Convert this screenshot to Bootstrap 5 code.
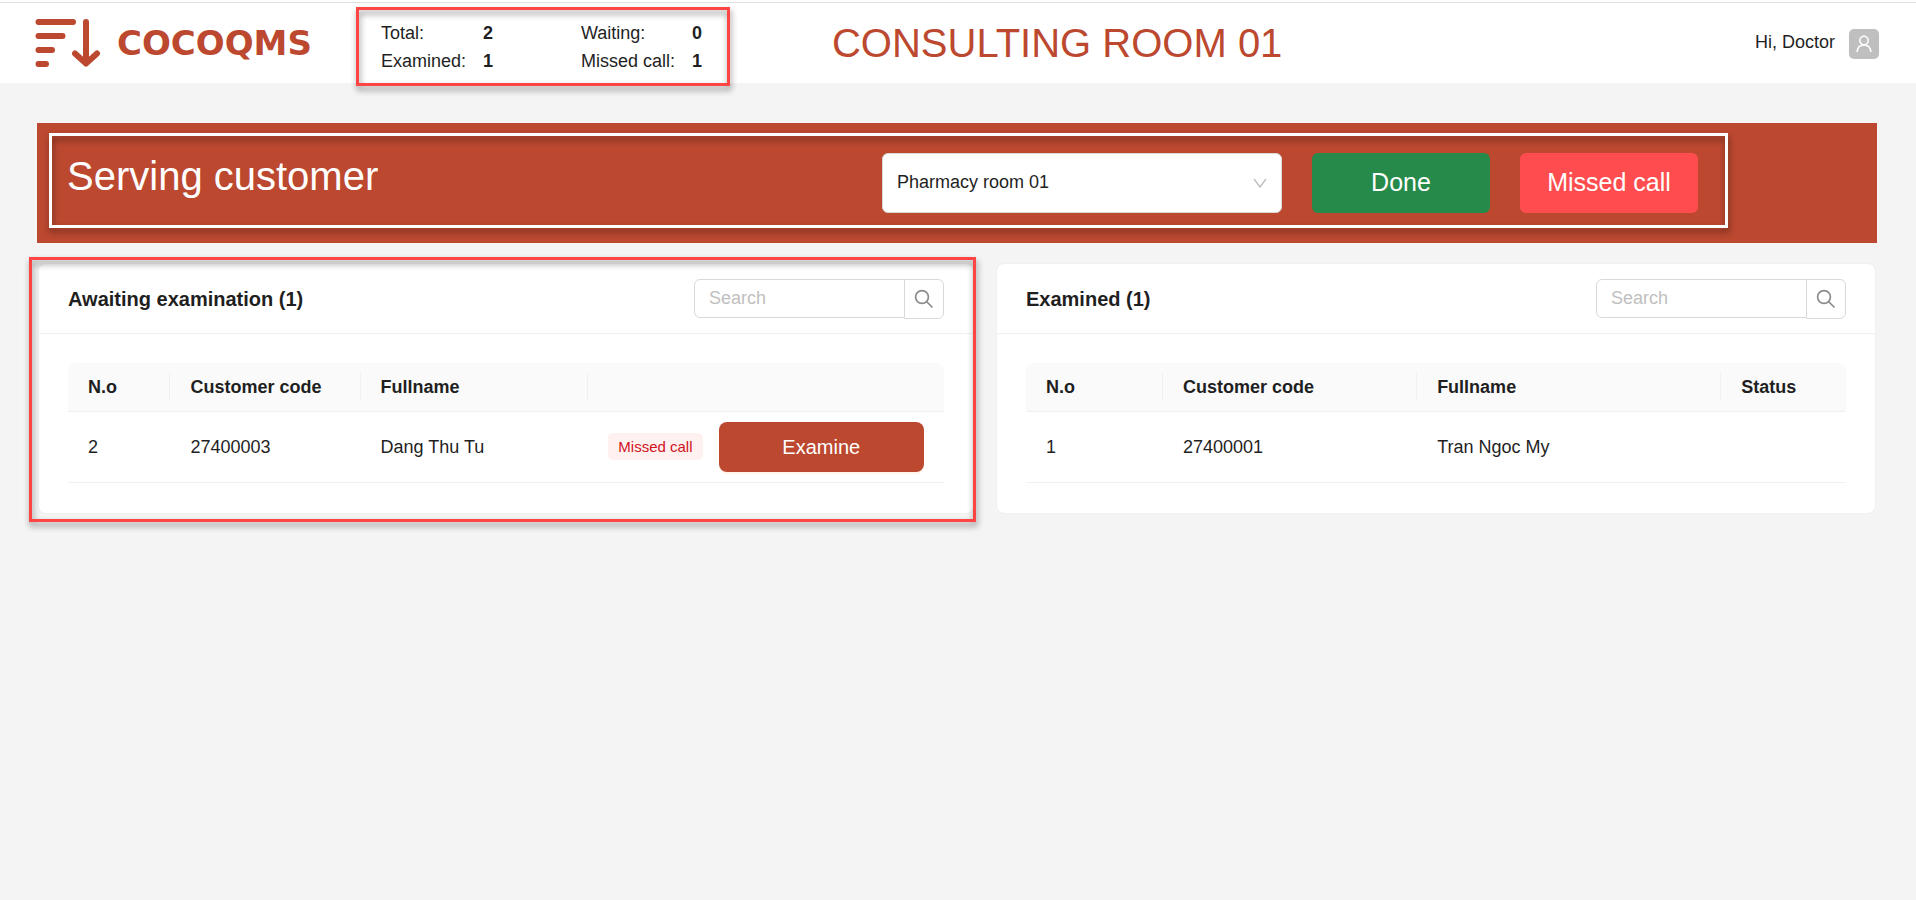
<!DOCTYPE html>
<html lang="en">
<head>
<meta charset="utf-8">
<meta name="viewport" content="width=device-width, initial-scale=1">
<title>CocoQMS – Consulting room 01</title>
<link href="https://cdn.jsdelivr.net/npm/bootstrap@5.3.0/dist/css/bootstrap.min.css" rel="stylesheet">
<style>
  :root { --brand: #bc4830; --ink: #1f1f1f; --line: #f0f0f0; --edge: #d9d9d9; }
  body { background: #f4f4f4; color: var(--ink); font-family: "Liberation Sans", Arial, sans-serif; font-size: 18px; line-height: 28px; }

  /* Top bar */
  .topbar { min-height: 83px; padding: 2px 37px 0 35px; z-index: 1; }
  .topbar::before { content: ""; position: absolute; left: 0; right: 0; top: 2px; height: 1px; background: #e0e0e0; }
  .brand-name { color: var(--brand); font: bold 34px/40px "DejaVu Sans", sans-serif; }
  .stats { padding: 8px 25px; margin: 5px 0 -3px 44px; width: 374px; height: 79px; }
  .stats-grid { display: grid; grid-template-columns: 102px 98px 111px auto; width: max-content; }
  .stats-grid dt { font-weight: 400; }
  .room-title { color: var(--brand); font-size: 40px; line-height: 50px; margin-left: 102px; }
  .user { padding-top: 26px; gap: 14px; }
  .avatar { width: 30px; height: 30px; border-radius: 5px; background: #bfbfbf; }

  /* Highlight frames drawn over a region */
  .frame { position: absolute; pointer-events: none; border: 3px solid #ff4444; filter: drop-shadow(1px 4px 3px rgba(0, 0, 0, .45)); z-index: 2; }
  .frame-stats { inset: 0; }
  .frame-waiting { inset: -7px -3px -9px -10px; }
  .frame-serving { inset: 10px 149px 15px 12px; border-color: #fff; }

  /* Page body */
  .page { padding: 40px 39px 40px 37px; }
  .serving { background: var(--brand); min-height: 120px; padding: 30px 179px 30px 30px; gap: 30px; }
  .serving h2 { font-size: 40px; line-height: 46px; color: #fff; }
  .room-select { width: 400px; height: 60px; border: 1px solid var(--edge); border-radius: 6px; padding: 0 40px 2px 14px; font-size: 18px; color: var(--ink);
    background-image: url("data:image/svg+xml,%3csvg xmlns='http://www.w3.org/2000/svg' viewBox='0 0 14 10'%3e%3cpath d='M1 1l6 8 6-8' fill='none' stroke='%23bfbfbf' stroke-width='1.4'/%3e%3c/svg%3e");
    background-size: 14px 10px; background-position: right 14px center; }
  .action { width: 178px; height: 60px; border: 0; border-radius: 6px; font-size: 25px; color: #fff; }
  .action-done { background: #258a4a; }
  .action-missed { background: #ff4d4f; }

  .panels { display: grid; grid-template-columns: 936fr 880fr; gap: 22px; margin: 20px 1px 0; }
  .panel { border: 1px solid var(--line); border-radius: 8px; }
  .panel-head { height: 70px; padding: 0 29px; border-bottom: 1px solid var(--line); }
  .panel-head h3 { font-size: 20px; line-height: 28px; }
  .panel-body { padding: 29px 29px 30px; }

  .search { width: 250px; }
  .search .form-control { height: 39px; border: 1px solid var(--edge); border-radius: 6px; font-size: 18px; padding: 0 14px; color: var(--ink); }
  .search .form-control::placeholder { color: #bfbfbf; }
  .search .btn { width: 40px; height: 40px; padding: 0; border: 1px solid var(--edge); border-radius: 0 6px 6px 0; background: #fff; line-height: 0; }

  .queue { table-layout: fixed; width: 100%; }
  .queue th { position: relative; height: 48px; padding: 0 20px; background: #fafafa; border-bottom: 1px solid var(--line); }
  .queue th:first-child { border-top-left-radius: 8px; }
  .queue th:last-child { border-top-right-radius: 8px; }
  .queue th:not(:last-child)::after { content: ""; position: absolute; right: 0; top: 10px; width: 1px; height: 28px; background: var(--line); }
  .queue td { height: 71px; padding: 10px 20px; border-bottom: 1px solid var(--line); }
  .queue-waiting .c1 { width: 11.7%; } .queue-waiting .c2 { width: 21.7%; } .queue-waiting .c3 { width: 26%; }
  .queue-done .c1 { width: 16.7%; } .queue-done .c2 { width: 31%; } .queue-done .c3 { width: 37.1%; }
  .tag { background: #fff1f0; color: #cf1322; font-size: 15px; line-height: 27px; padding: 0 10px; border-radius: 5px; }
  .examine { height: 50px; border: 0; border-radius: 8px; background: var(--brand); color: #fff; font-size: 20px; box-shadow: 0 2px 0 rgba(255, 205, 150, .2); }
</style>
</head>
<body>

<header class="topbar bg-white position-relative d-flex align-items-start">
  <a href="#" class="d-flex align-items-center text-decoration-none mt-3" aria-label="COCOQMS">
    <svg width="66" height="50" viewBox="0 0 66 50" fill="none" stroke="#bc4830" stroke-width="6" stroke-linecap="round" stroke-linejoin="round" aria-hidden="true">
      <path d="M3.500 4h34.500M3.500 18h24M3.500 32h13.500M3.500 46h7.500"/>
      <path d="M51 4v41M40 35.500l11 10 11-10"/>
    </svg>
    <span class="brand-name ms-3">COCOQMS</span>
  </a>
  <div class="stats position-relative flex-shrink-0">
    <dl class="stats-grid mb-0 mt-1">
      <dt>Total:</dt><dd class="fw-bold mb-0">2</dd>
      <dt>Waiting:</dt><dd class="fw-bold mb-0">0</dd>
      <dt>Examined:</dt><dd class="fw-bold mb-0">1</dd>
      <dt>Missed call:</dt><dd class="fw-bold mb-0">1</dd>
    </dl>
    <div class="frame frame-stats"></div>
  </div>
  <h1 class="room-title fw-normal mb-0 mt-3 text-nowrap">CONSULTING ROOM 01</h1>
  <div class="user d-flex align-items-center ms-auto text-nowrap">
    <span class="pb-1">Hi, Doctor</span>
    <span class="avatar d-flex align-items-center justify-content-center">
      <svg width="16" height="18" viewBox="0 0 16 18" fill="none" stroke="#fff" stroke-width="1.500" aria-hidden="true">
        <circle cx="8" cy="5.500" r="4.200"/>
        <path d="M1.200 17c.2-4.500 3-7 6.800-7s6.600 2.500 6.800 7"/>
      </svg>
    </span>
  </div>
</header>

<main class="page">
  <section class="serving position-relative d-flex align-items-start">
    <h2 class="fw-normal mb-0 me-auto text-nowrap">Serving customer</h2>
    <select class="form-select room-select" aria-label="Room">
      <option>Pharmacy room 01</option>
    </select>
    <button type="button" class="btn action action-done">Done</button>
    <button type="button" class="btn action action-missed">Missed call</button>
    <div class="frame frame-serving"></div>
  </section>

  <div class="panels">
    <section class="panel bg-white position-relative">
      <div class="panel-head d-flex align-items-center justify-content-between">
        <h3 class="fw-bold mb-0">Awaiting examination (1)</h3>
        <form class="search input-group flex-nowrap align-items-start">
          <input type="text" class="form-control" placeholder="Search" aria-label="Search awaiting">
          <button type="button" class="btn" aria-label="Search">
            <svg width="20" height="20" viewBox="0 0 20 20" fill="none" stroke="#8c8c8c" stroke-width="1.700" aria-hidden="true"><circle cx="8" cy="8" r="6.400"/><path d="M12.500 12.500l6 6"/></svg>
          </button>
        </form>
      </div>
      <div class="panel-body">
        <table class="queue queue-waiting">
          <thead><tr><th class="c1">N.o</th><th class="c2">Customer code</th><th class="c3">Fullname</th><th></th></tr></thead>
          <tbody>
            <tr>
              <td>2</td><td>27400003</td><td>Dang Thu Tu</td>
              <td>
                <div class="d-flex align-items-center gap-3">
                  <span class="tag text-nowrap">Missed call</span>
                  <button type="button" class="btn examine flex-grow-1">Examine</button>
                </div>
              </td>
            </tr>
          </tbody>
        </table>
      </div>
      <div class="frame frame-waiting"></div>
    </section>

    <section class="panel bg-white">
      <div class="panel-head d-flex align-items-center justify-content-between">
        <h3 class="fw-bold mb-0">Examined (1)</h3>
        <form class="search input-group flex-nowrap align-items-start">
          <input type="text" class="form-control" placeholder="Search" aria-label="Search examined">
          <button type="button" class="btn" aria-label="Search">
            <svg width="20" height="20" viewBox="0 0 20 20" fill="none" stroke="#8c8c8c" stroke-width="1.700" aria-hidden="true"><circle cx="8" cy="8" r="6.400"/><path d="M12.500 12.500l6 6"/></svg>
          </button>
        </form>
      </div>
      <div class="panel-body">
        <table class="queue queue-done">
          <thead><tr><th class="c1">N.o</th><th class="c2">Customer code</th><th class="c3">Fullname</th><th>Status</th></tr></thead>
          <tbody><tr><td>1</td><td>27400001</td><td>Tran Ngoc My</td><td></td></tr></tbody>
        </table>
      </div>
    </section>
  </div>
</main>

<script src="https://cdn.jsdelivr.net/npm/bootstrap@5.3.0/dist/js/bootstrap.bundle.min.js"></script>
</body>
</html>
